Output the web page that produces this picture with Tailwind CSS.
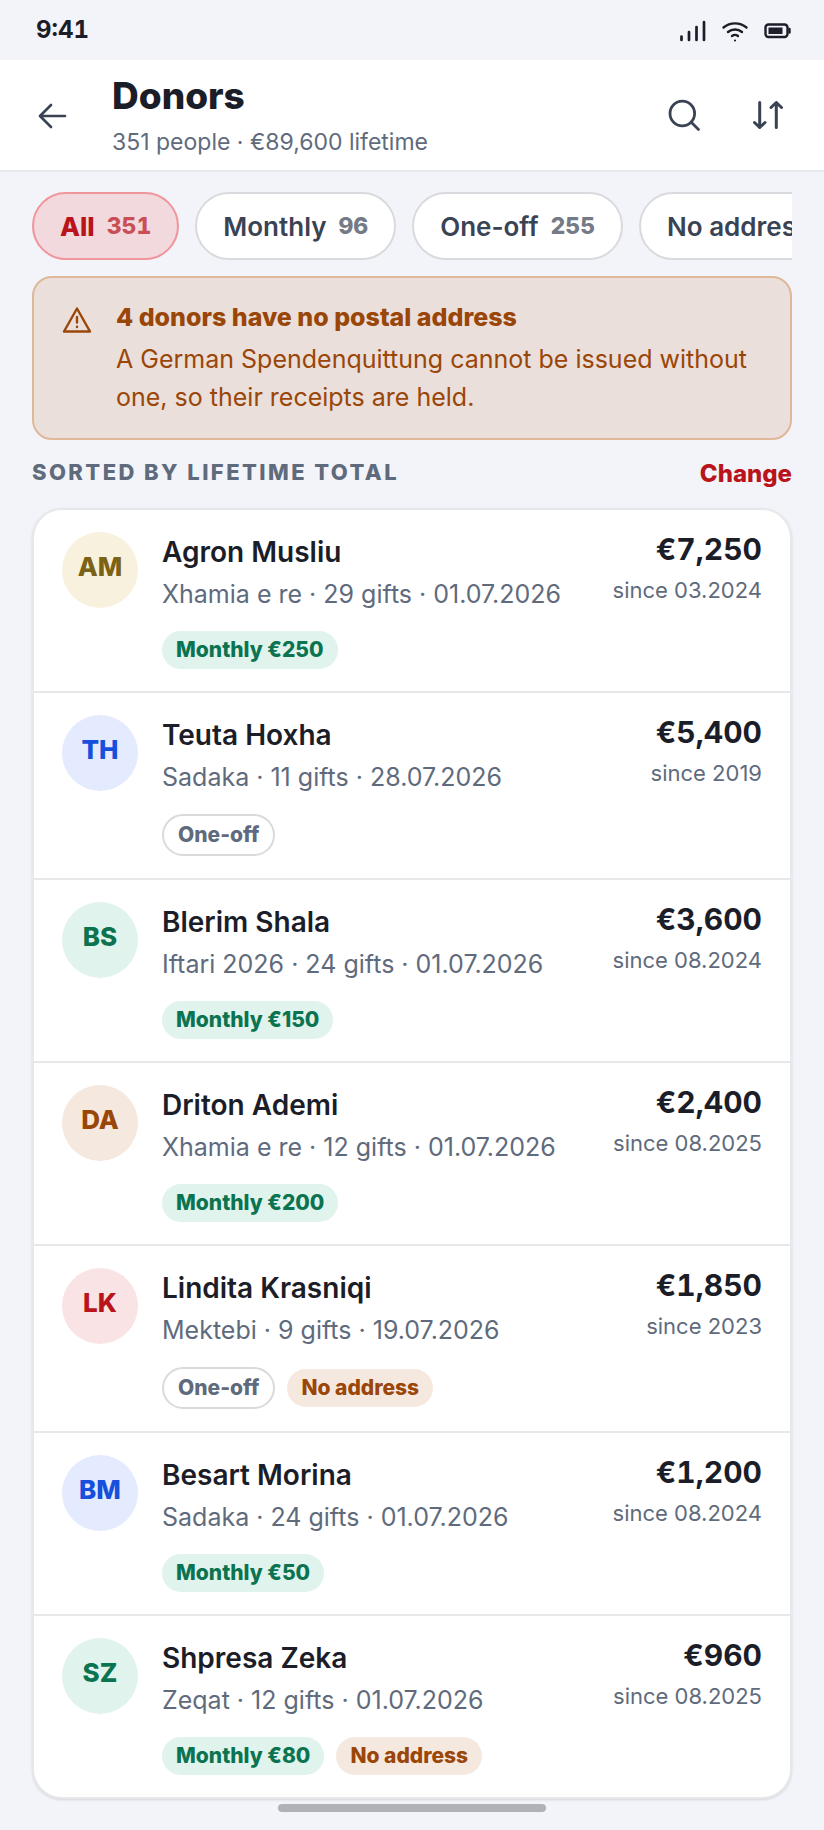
<!DOCTYPE html>
<html lang="en">
  <head>
    <meta charset="UTF-8" />
    <meta name="viewport" content="width=device-width, initial-scale=1.0" />
    <title>Donors</title>
    <script src="https://cdn.jsdelivr.net/npm/@tailwindcss/browser@4"></script>
  </head>
  <body class="min-h-screen bg-[#f3f4f9] font-['Inter',sans-serif] text-[#1b1d28]">
    <!-- Status bar -->
    <div class="flex h-[60px] items-center justify-between pl-9 pr-8">
      <span class="text-2xl font-bold tabular-nums">9:41</span>
      <div class="flex items-center gap-[15px]">
        <svg class="h-6 w-7" viewBox="0 0 28 24" fill="none" stroke="currentColor" stroke-width="2.7" stroke-linecap="round">
          <path d="M3.500 18.500v3.500M11 14v8M18.500 9v13M26 4v18" />
        </svg>
        <svg class="h-6 w-7" viewBox="0 0 28 24" fill="none" stroke="currentColor" stroke-width="2.4" stroke-linecap="round">
          <path d="M2.500 9.500a18 18 0 0 1 23 0M7 14a11 11 0 0 1 14 0M11 18a5 5 0 0 1 6 0" />
          <circle cx="14" cy="22.500" r="1.100" fill="currentColor" stroke="none" />
        </svg>
        <svg class="h-6 w-7" viewBox="0 0 28 24" fill="none" stroke="currentColor" stroke-width="2.4">
          <rect x="1.500" y="6.500" width="22" height="12.500" rx="3" />
          <path d="M4.500 9.500H18.500V16H4.500Z" fill="currentColor" stroke="none" />
          <path d="M25.500 11V14.500" stroke-linecap="round" />
        </svg>
      </div>
    </div>

    <!-- Header -->
    <header class="flex h-28 items-center border-b-2 border-[#e7e8ec] bg-white pr-7 pl-6">
      <button type="button" aria-label="Back" class="flex size-14 items-center justify-center text-[#3a4353]">
        <svg class="size-8" viewBox="0 0 32 32" fill="none" stroke="currentColor" stroke-width="2.7" stroke-linecap="round" stroke-linejoin="round">
          <path d="M29 17H4M15 6L4 17L15 28" />
        </svg>
      </button>
      <div class="ml-8 flex-1">
        <h1 class="text-[37px] leading-12 font-extrabold">Donors</h1>
        <p class="mt-1.5 text-[23px] leading-8 text-[#5f6b7c]">351 people · €89,600 lifetime</p>
      </div>
      <div class="flex gap-7 text-[#3a4353]">
        <button type="button" aria-label="Search" class="flex size-14 items-center justify-center">
          <svg class="size-9" viewBox="0 0 36 36" fill="none" stroke="currentColor" stroke-width="2.8" stroke-linecap="round">
            <circle cx="16.300" cy="16.500" r="12.300" />
            <path d="M25.500 25.500L32.500 32.500" />
          </svg>
        </button>
        <button type="button" aria-label="Sort" class="flex size-14 items-center justify-center">
          <svg class="size-9" viewBox="0 0 36 36" fill="none" stroke="currentColor" stroke-width="3" stroke-linecap="round" stroke-linejoin="round">
            <path d="M9.700 5.500V30.500M4.500 25.500L9.700 30.500L15 25.500M26.300 30.500V5.500M21 10.500L26.300 5.500L31.500 10.500" />
          </svg>
        </button>
      </div>
    </header>

    <main class="flex flex-col gap-4 px-8 pt-5 pb-[30px]">
      <!-- Filters -->
      <div class="flex gap-4 overflow-x-auto overflow-y-hidden [scrollbar-width:none] text-[26px] font-semibold whitespace-nowrap text-[#3a4353]">
        <button type="button" aria-pressed="true" class="flex h-[68px] shrink-0 items-center gap-3 rounded-full border-2 border-[#f0959b] bg-[#f2d9de] px-[26px] font-extrabold text-[#b9141c]">
          All <span class="text-[23px] leading-8 font-extrabold tabular-nums opacity-70">351</span>
        </button>
        <button type="button" class="flex h-[68px] shrink-0 items-center gap-3 rounded-full border-2 border-[#d9dadd] bg-white px-[26px]">
          Monthly <span class="text-[23px] leading-8 font-extrabold tabular-nums opacity-70">96</span>
        </button>
        <button type="button" class="flex h-[68px] shrink-0 items-center gap-3 rounded-full border-2 border-[#d9dadd] bg-white px-[26px]">
          One-off <span class="text-[23px] leading-8 font-extrabold tabular-nums opacity-70">255</span>
        </button>
        <button type="button" class="flex h-[68px] shrink-0 items-center gap-3 rounded-full border-2 border-[#d9dadd] bg-white px-[26px]">
          No address <span class="text-[23px] leading-8 font-extrabold tabular-nums opacity-70">4</span>
        </button>
      </div>

      <!-- Warning -->
      <section class="flex gap-6 rounded-[20px] border-2 border-[#dfb799] bg-[#eadfda] px-7 pt-5 pb-[22px] text-[25px] leading-[38px] text-[#9a4608]">
        <svg class="mt-2 size-[30px] shrink-0" viewBox="0 0 30 30" fill="none" stroke="currentColor" stroke-width="2.4" stroke-linecap="round" stroke-linejoin="round">
          <path d="M15 2.500L28 25.500H2Z" />
          <path d="M15 11V16.500M15 20.800V21" />
        </svg>
        <div>
          <h2 class="font-extrabold">4 donors have no postal address</h2>
          <p class="mt-1">A German Spendenquittung cannot be issued without one, so their receipts are held.</p>
        </div>
      </section>

      <!-- Sorting -->
      <div class="flex items-start justify-between">
        <h2 class="text-[22px] leading-8 font-extrabold tracking-[0.11em] text-[#5f6b7c] uppercase">Sorted by lifetime total</h2>
        <button type="button" class="text-2xl leading-9 font-extrabold text-[#b9141c]">Change</button>
      </div>

      <!-- Donor list -->
      <ul class="divide-y-2 divide-[#e7e8ea] rounded-[30px] border-2 border-[#e7e8ea] bg-white shadow-sm">
        <li class="flex items-start gap-6 px-7 py-[22px]">
          <span class="flex size-[76px] shrink-0 justify-center rounded-full bg-[#f8f1de] text-[26px] leading-[70px] font-extrabold text-[#7a6216]">AM</span>
          <div class="flex-1">
            <h3 class="text-[28px] leading-10 font-semibold">Agron Musliu</h3>
            <p class="mt-1 text-[25px] leading-9 text-[#5f6b7c]">Xhamia e re · 29 gifts · 01.07.2026</p>
            <div class="mt-[19px] flex items-center gap-3 text-[21px] leading-[38px] font-extrabold">
              <span class="rounded-full bg-[#e0f3ec] px-3.5 text-[#0b7350]">Monthly €250</span>
            </div>
          </div>
          <div class="text-right">
            <p class="text-[30px] leading-[34px] font-bold tabular-nums">€7,250</p>
            <p class="mt-2 text-[22px] leading-8 text-[#5f6b7c]">since 03.2024</p>
          </div>
        </li>
        <li class="flex items-start gap-6 px-7 py-[22px]">
          <span class="flex size-[76px] shrink-0 justify-center rounded-full bg-[#e4ebfe] text-[26px] leading-[70px] font-extrabold text-[#1650dc]">TH</span>
          <div class="flex-1">
            <h3 class="text-[28px] leading-10 font-semibold">Teuta Hoxha</h3>
            <p class="mt-1 text-[25px] leading-9 text-[#5f6b7c]">Sadaka · 11 gifts · 28.07.2026</p>
            <div class="mt-[19px] flex items-center gap-3 text-[21px] leading-[38px] font-extrabold">
              <span class="rounded-full border-2 border-[#d9dadb] px-3.5 text-[#5f6b7c]">One-off</span>
            </div>
          </div>
          <div class="text-right">
            <p class="text-[30px] leading-[34px] font-bold tabular-nums">€5,400</p>
            <p class="mt-2 text-[22px] leading-8 text-[#5f6b7c]">since 2019</p>
          </div>
        </li>
        <li class="flex items-start gap-6 px-7 py-[22px]">
          <span class="flex size-[76px] shrink-0 justify-center rounded-full bg-[#e0f3ec] text-[26px] leading-[70px] font-extrabold text-[#0b7350]">BS</span>
          <div class="flex-1">
            <h3 class="text-[28px] leading-10 font-semibold">Blerim Shala</h3>
            <p class="mt-1 text-[25px] leading-9 text-[#5f6b7c]">Iftari 2026 · 24 gifts · 01.07.2026</p>
            <div class="mt-[19px] flex items-center gap-3 text-[21px] leading-[38px] font-extrabold">
              <span class="rounded-full bg-[#e0f3ec] px-3.5 text-[#0b7350]">Monthly €150</span>
            </div>
          </div>
          <div class="text-right">
            <p class="text-[30px] leading-[34px] font-bold tabular-nums">€3,600</p>
            <p class="mt-2 text-[22px] leading-8 text-[#5f6b7c]">since 08.2024</p>
          </div>
        </li>
        <li class="flex items-start gap-6 px-7 py-[22px]">
          <span class="flex size-[76px] shrink-0 justify-center rounded-full bg-[#f5e8df] text-[26px] leading-[70px] font-extrabold text-[#9a4608]">DA</span>
          <div class="flex-1">
            <h3 class="text-[28px] leading-10 font-semibold">Driton Ademi</h3>
            <p class="mt-1 text-[25px] leading-9 text-[#5f6b7c]">Xhamia e re · 12 gifts · 01.07.2026</p>
            <div class="mt-[19px] flex items-center gap-3 text-[21px] leading-[38px] font-extrabold">
              <span class="rounded-full bg-[#e0f3ec] px-3.5 text-[#0b7350]">Monthly €200</span>
            </div>
          </div>
          <div class="text-right">
            <p class="text-[30px] leading-[34px] font-bold tabular-nums">€2,400</p>
            <p class="mt-2 text-[22px] leading-8 text-[#5f6b7c]">since 08.2025</p>
          </div>
        </li>
        <li class="flex items-start gap-6 px-7 py-[22px]">
          <span class="flex size-[76px] shrink-0 justify-center rounded-full bg-[#fae3e4] text-[26px] leading-[70px] font-extrabold text-[#b9141c]">LK</span>
          <div class="flex-1">
            <h3 class="text-[28px] leading-10 font-semibold">Lindita Krasniqi</h3>
            <p class="mt-1 text-[25px] leading-9 text-[#5f6b7c]">Mektebi · 9 gifts · 19.07.2026</p>
            <div class="mt-[19px] flex items-center gap-3 text-[21px] leading-[38px] font-extrabold">
              <span class="rounded-full border-2 border-[#d9dadb] px-3.5 text-[#5f6b7c]">One-off</span>
              <span class="rounded-full bg-[#f5e8df] px-3.5 text-[#9a4608]">No address</span>
            </div>
          </div>
          <div class="text-right">
            <p class="text-[30px] leading-[34px] font-bold tabular-nums">€1,850</p>
            <p class="mt-2 text-[22px] leading-8 text-[#5f6b7c]">since 2023</p>
          </div>
        </li>
        <li class="flex items-start gap-6 px-7 py-[22px]">
          <span class="flex size-[76px] shrink-0 justify-center rounded-full bg-[#e4ebfe] text-[26px] leading-[70px] font-extrabold text-[#1650dc]">BM</span>
          <div class="flex-1">
            <h3 class="text-[28px] leading-10 font-semibold">Besart Morina</h3>
            <p class="mt-1 text-[25px] leading-9 text-[#5f6b7c]">Sadaka · 24 gifts · 01.07.2026</p>
            <div class="mt-[19px] flex items-center gap-3 text-[21px] leading-[38px] font-extrabold">
              <span class="rounded-full bg-[#e0f3ec] px-3.5 text-[#0b7350]">Monthly €50</span>
            </div>
          </div>
          <div class="text-right">
            <p class="text-[30px] leading-[34px] font-bold tabular-nums">€1,200</p>
            <p class="mt-2 text-[22px] leading-8 text-[#5f6b7c]">since 08.2024</p>
          </div>
        </li>
        <li class="flex items-start gap-6 px-7 py-[22px]">
          <span class="flex size-[76px] shrink-0 justify-center rounded-full bg-[#e0f3ec] text-[26px] leading-[70px] font-extrabold text-[#0b7350]">SZ</span>
          <div class="flex-1">
            <h3 class="text-[28px] leading-10 font-semibold">Shpresa Zeka</h3>
            <p class="mt-1 text-[25px] leading-9 text-[#5f6b7c]">Zeqat · 12 gifts · 01.07.2026</p>
            <div class="mt-[19px] flex items-center gap-3 text-[21px] leading-[38px] font-extrabold">
              <span class="rounded-full bg-[#e0f3ec] px-3.5 text-[#0b7350]">Monthly €80</span>
              <span class="rounded-full bg-[#f5e8df] px-3.5 text-[#9a4608]">No address</span>
            </div>
          </div>
          <div class="text-right">
            <p class="text-[30px] leading-[34px] font-bold tabular-nums">€960</p>
            <p class="mt-2 text-[22px] leading-8 text-[#5f6b7c]">since 08.2025</p>
          </div>
        </li>
      </ul>
    </main>

    <!-- Home indicator -->
    <div class="fixed bottom-[18px] left-1/2 h-2 w-[268px] -translate-x-1/2 rounded-full bg-[#b1b2b7]"></div>
  </body>
</html>
